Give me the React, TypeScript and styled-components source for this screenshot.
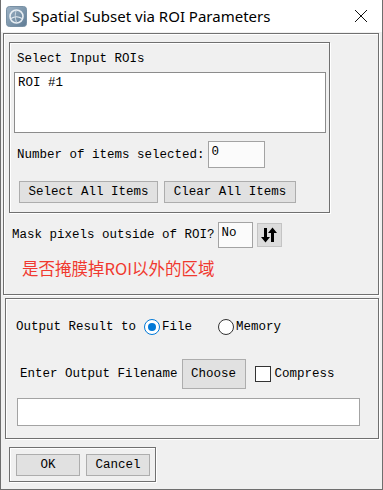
import styled, { createGlobalStyle } from "styled-components";

const GlobalStyle = createGlobalStyle`
  html, body {
    margin: 0;
    padding: 0;
    background: #f0f0f0;
  }
  * {
    box-sizing: border-box;
  }
`;

const Window = styled.div`
  width: 383px;
  height: 490px;
  display: flex;
  flex-direction: column;
  background: #f0f0f0;
  border: 1px solid #6e6e6e;
  border-top: none;
  font-family: "Liberation Mono", "DejaVu Sans Mono", monospace;
  font-size: 12.5px;
  color: #000;
`;

const TitleBar = styled.div`
  height: 32px;
  flex-shrink: 0;
  display: flex;
  align-items: center;
  padding: 0 14px 0 5px;
  background: #fff;
  font-family: "Noto Sans", "Open Sans", sans-serif;
  font-size: 15px;
`;

const Title = styled.span`
  flex: 1;
  margin-left: 5px;
  margin-top: -1px;
`;

const Body = styled.div`
  flex: 1;
  display: flex;
  flex-direction: column;
  padding: 1px 3px 0 2px;
`;

const Panel = styled.div<{ $height: number; $inset?: number }>`
  height: ${({ $height }) => $height}px;
  margin-left: ${({ $inset = 0 }) => $inset}px;
  display: flex;
  flex-direction: column;
  align-items: flex-start;
  border: 1px solid #707070;
  box-shadow: inset 1px 1px 0 #fff, 1px 1px 0 #fff;
`;

const GroupBox = styled.div`
  width: 321px;
  height: 171px;
  margin: 8px 0 0 5px;
  padding: 8px 0 0 4px;
  display: flex;
  flex-direction: column;
  align-items: flex-start;
  border: 1px solid #707070;
  box-shadow: inset 1px 1px 0 #fff, 1px 1px 0 #fff;
`;

const Label = styled.span<{ $left?: number }>`
  line-height: 16px;
  margin-left: ${({ $left = 0 }) => $left}px;
  white-space: pre;
`;

const ListBox = styled.div`
  width: 312px;
  height: 61px;
  margin-top: 5px;
  padding: 2px 0 0 3px;
  background: #fff;
  border: 1px solid #8c8c8c;
  line-height: 16px;
`;

const Row = styled.div<{ $top: number; $left?: number; $gap?: number }>`
  display: flex;
  align-items: center;
  margin-top: ${({ $top }) => $top}px;
  margin-left: ${({ $left = 0 }) => $left}px;
  gap: ${({ $gap = 0 }) => $gap}px;
`;

const Field = styled.div<{ $w: number; $h: number }>`
  width: ${({ $w }) => $w}px;
  height: ${({ $h }) => $h}px;
  padding: 2px 0 0 3px;
  background: #fbfbfb;
  border: 1px solid #a3a3a3;
  line-height: 16px;
`;

const Button = styled.div<{ $w: number; $h: number }>`
  width: ${({ $w }) => $w}px;
  height: ${({ $h }) => $h}px;
  display: flex;
  align-items: center;
  justify-content: center;
  background: #e1e1e1;
  border: 1px solid #adadad;
  white-space: pre;
`;

const IconButton = styled(Button)`
  background: #dcdcdc;
  border-color: #c4c4c4;
`;

const Note = styled.div`
  margin: 10px 0 0 18px;
  line-height: 20px;
  font-family: "Noto Sans CJK SC", "Noto Sans", sans-serif;
  font-size: 16.5px;
  color: #f0392f;
`;

const Radio = styled.span<{ $on?: boolean }>`
  width: 16px;
  height: 16px;
  border-radius: 50%;
  display: inline-flex;
  align-items: center;
  justify-content: center;
  background: #fff;
  border: 1px solid ${({ $on }) => ($on ? "#0078d7" : "#333")};
  &::after {
    content: "";
    width: 8px;
    height: 8px;
    border-radius: 50%;
    background: ${({ $on }) => ($on ? "#0078d7" : "transparent")};
  }
`;

const Check = styled.span`
  width: 16px;
  height: 16px;
  background: #fff;
  border: 1px solid #333;
`;

const Option = styled.span`
  display: inline-flex;
  align-items: center;
  gap: 2px;
`;

const Footer = styled.div`
  width: 147px;
  height: 35px;
  margin: 8px 0 0 6px;
  display: flex;
  align-items: center;
  gap: 6px;
  padding: 0 0 0 6px;
  border: 1px solid #707070;
  box-shadow: inset 1px 1px 0 #fff, 1px 1px 0 #fff;
`;

function AppIcon() {
  return (
    <svg width="21" height="21" viewBox="0 0 21 21">
      <defs>
        <linearGradient id="ig" x1="0" y1="0" x2="1" y2="1">
          <stop offset="0" stopColor="#9fb4c6" />
          <stop offset="1" stopColor="#5d7a93" />
        </linearGradient>
      </defs>
      <rect x="0.5" y="0.5" width="20" height="20" rx="3" fill="url(#ig)" stroke="#7890a4" />
      <circle cx="10.5" cy="10.5" r="6.5" fill="none" stroke="#e8eef3" strokeWidth="1.6" />
      <path d="M5 12.5 Q10.5 9 16 12.5" fill="none" stroke="#e8eef3" strokeWidth="1.2" />
      <path d="M10.5 4 Q8 8 10.5 17" fill="none" stroke="#d0dae3" strokeWidth="1" />
    </svg>
  );
}

function CloseIcon() {
  return (
    <svg width="14" height="14" viewBox="0 0 14 14">
      <path d="M1 1 L13 13 M13 1 L1 13" stroke="#111" strokeWidth="1" />
    </svg>
  );
}

function SwapIcon() {
  return (
    <svg width="18" height="16" viewBox="0 0 18 16">
      <path d="M4 1 H7 V10 H10 L5.5 15.5 L1 10 H4 Z" fill="#000" />
      <path d="M11 15 H14 V6 H17 L12.5 0.5 L8 6 H11 Z" fill="#000" />
    </svg>
  );
}

export default function App() {
  return (
    <>
      <GlobalStyle />
      <Window>
        <TitleBar>
          <AppIcon />
          <Title>Spatial Subset via ROI Parameters</Title>
          <CloseIcon />
        </TitleBar>
        <Body>
          <Panel $height={262}>
            <GroupBox>
              <Label $left={3}>Select Input ROIs</Label>
              <ListBox>ROI #1</ListBox>
              <Row $top={8} $left={3} $gap={3}>
                <Label>Number of items selected:</Label>
                <Field $w={57} $h={27}>0</Field>
              </Row>
              <Row $top={13} $left={5} $gap={6}>
                <Button $w={139} $h={22}>Select All Items</Button>
                <Button $w={132} $h={22}>Clear All Items</Button>
              </Row>
            </GroupBox>
            <Row $top={9} $left={8} $gap={3}>
              <Label>Mask pixels outside of ROI?</Label>
              <Field $w={35} $h={26}>No</Field>
              <IconButton $w={25} $h={24} style={{ marginLeft: 1 }}>
                <SwapIcon />
              </IconButton>
            </Row>
            <Note>是否掩膜掉ROI以外的区域</Note>
          </Panel>
          <Panel $height={141} $inset={2} style={{ marginTop: 3 }}>
            <Row $top={20} $left={10} $gap={8}>
              <Label>Output Result to</Label>
              <Option>
                <Radio $on />
                <Label>File</Label>
              </Option>
              <Option style={{ marginLeft: 18 }}>
                <Radio />
                <Label>Memory</Label>
              </Option>
            </Row>
            <Row $top={24} $left={14} $gap={4}>
              <Label>Enter Output Filename</Label>
              <Button $w={64} $h={30}>Choose</Button>
              <Option style={{ marginLeft: 5 }}>
                <Check />
                <Label style={{ marginLeft: 2 }}>Compress</Label>
              </Option>
            </Row>
            <Field $w={343} $h={28} style={{ margin: "9px 0 0 11px", background: "#fff" }} />
          </Panel>
          <Footer>
            <Button $w={64} $h={22}>OK</Button>
            <Button $w={64} $h={22}>Cancel</Button>
          </Footer>
        </Body>
      </Window>
    </>
  );
}
